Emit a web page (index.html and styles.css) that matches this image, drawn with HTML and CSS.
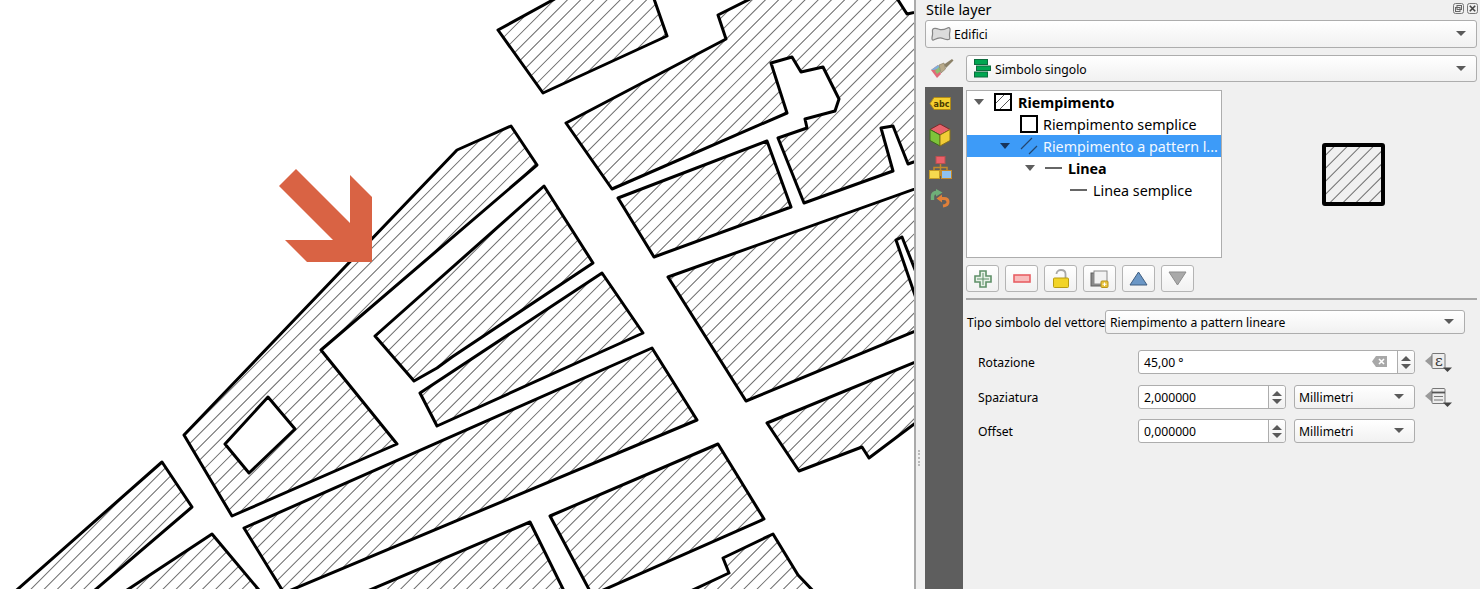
FILE: index.html
```html
<!DOCTYPE html>
<html lang="it">
<head>
<meta charset="utf-8">
<title>Stile layer</title>
<link rel="stylesheet" href="styles.css">
</head>
<body>
<div class="app">
  <div class="map">
    <svg class="map-svg" width="914" height="589" viewBox="0 0 914 589">
      <defs>
        <path id="blds" d="M498 30L560 -4L653 -4L667 36L543 93Z
          M566 123L726 39L718 15L770 -11L890 -11L898 0L907 14L930 9L930 156L908 164L893 126L881 128L893 171L804 203L778 138L807 128L805 119L835 111L839 99L823 67L801 72L792 57L771 63L787 113L612 189Z
          M618 198L767 141L791 207L654 257Z
          M668 277L940 180L940 290L925 295L902 237L896 240L918 304L925 327L746 401Z
          M767 423L930 356L930 412L869 458L862 447L799 471Z
          M550 516L718 444L764 519L592 595Z
          M244 528L652 348L697 420L284 593Z
          M358 595L530 522L566 595Z
          M680 596L729 573L723 558L773 534L798 575L818 596Z
          M10 596L162 462L192 507L88 596Z
          M118 596L212 534L264 596Z
          M184 435L457 150L511 126L537 165L321 350L397 444L232 516Z
          M268 397L225 444L249 473L295 429Z
          M375 336L544 186L593 263L452 357L437 368L414 381Z
          M420 393L602 273L643 333L437 426Z"/>
        <clipPath id="bldclip"><use href="#blds" clip-rule="evenodd"/></clipPath>
      </defs>
      <g clip-path="url(#bldclip)">
        <line class="hatch-map" x1="0" y1="0" x2="800" y2="800"/>
      </g>
      <use class="bld" href="#blds"/>
      <polygon class="arrow" points="296,169 279,186 333,240 285,240 307,262 372,262 372,197 350,175 350,223"/>
    </svg>
  </div>

  <aside class="panel">
    <span class="grip"></span>
    <header class="titlebar">
      <span class="title">Stile layer</span>
      <span class="dock-btns">
        <svg width="11" height="11" viewBox="0 0 11 11"><rect class="dock-frame" x=".5" y=".5" width="10" height="10" rx="2"/><rect class="dock-line" x="4" y="2.5" width="4.5" height="4"/><rect class="dock-line" x="2.5" y="4.5" width="4.5" height="4"/></svg>
        <svg width="11" height="11" viewBox="0 0 11 11"><rect class="dock-frame" x=".5" y=".5" width="10" height="10" rx="2"/><path class="dock-x" d="M2.8 2.8L8.2 8.2M8.2 2.8L2.8 8.2"/></svg>
      </span>
    </header>

    <div class="combo combo-layer">
      <svg class="ico-blob" width="20" height="14" viewBox="0 0 20 14"><path d="M1.5 3C2 .8 5 1 8 2.2S13 2.8 16 1.2 19.5 2 18.8 5 18.6 9 18.8 11 15 13 12 11.5 6 11.2 3.5 12.6 .6 12 1.3 9 1.2 5 1.5 3Z"/></svg>
      <span class="combo-text">Edifici</span>
      <i class="caret"></i>
    </div>

    <div class="renderer-row">
      <div class="brush-cell">
        <svg width="24" height="22" viewBox="0 0 24 22">
          <path fill="#e06a78" d="M1 12L8 7L11 16L7 20Z"/>
          <path fill="#7fb0d8" d="M1 12L8 7L11 10L4 12Z"/>
          <path fill="#8fbf70" d="M5 13L9 9L11 13L7 16Z"/>
          <path fill="#b8aa8a" stroke="#8b8168" stroke-width=".7" d="M9 7L14 5L15.500 11L11 15Z"/>
          <path fill="#8b8168" d="M14 6.500L22 1L23.500 2.500L16 10Z"/>
        </svg>
      </div>
      <div class="combo combo-renderer">
        <svg class="ico-single" width="17" height="19" viewBox="0 0 17 19">
          <rect x=".5" y=".5" width="13" height="5" /><rect x="2.5" y="7" width="14" height="4.500"/><rect x=".5" y="13" width="13" height="5"/>
        </svg>
        <span class="combo-text">Simbolo singolo</span>
        <i class="caret"></i>
      </div>
    </div>

    <div class="main">
      <nav class="sidebar">
        <span class="side-item">
          <svg width="23" height="15" viewBox="0 0 23 15"><path fill="#f5cf30" stroke="#b08a18" d="M5 1.500H21.500V13.500H5L1 7.500Z"/><text class="abc" x="12.500" y="10.500" text-anchor="middle">abc</text></svg>
        </span>
        <span class="side-item">
          <svg width="22" height="24" viewBox="0 0 22 24"><path fill="#e8636b" stroke="#7a2b2b" d="M11 1L21 6.500L11 12L1 6.500Z"/><path fill="#7ec33a" stroke="#3d6b1c" d="M1 6.500L11 12V23L1 17.500Z"/><path fill="#f2cd37" stroke="#8a7216" d="M21 6.500L11 12V23L21 17.500Z"/></svg>
        </span>
        <span class="side-item">
          <svg width="23" height="23" viewBox="0 0 23 23"><path fill="none" stroke="#c48a2a" stroke-width="1.500" d="M11.500 7V20M5 15V11.500H18V15"/><rect fill="#ec5f68" stroke="#b85050" x="7" y=".5" width="9" height="7"/><rect fill="#f6d94f" stroke="#c49a25" x=".5" y="14.500" width="10" height="8"/><rect fill="#8fc2f0" stroke="#c48a2a" x="12.500" y="14.500" width="10" height="8"/></svg>
        </span>
        <span class="side-item">
          <svg width="21" height="21" viewBox="0 0 21 21"><path fill="none" stroke="#6fae78" stroke-width="3.400" d="M3.500 11V7C3.500 4.500 5 3.500 8 3.500"/><path fill="#6fae78" d="M7 0L13.500 3.500L7 7.500Z"/><path fill="none" stroke="#e0803a" stroke-width="3" d="M13 9.500H15C18 9.500 19 11 19 13S17.500 16.500 14 17"/><path fill="#e0803a" d="M13 5.500L7.500 9.500L13 13.500Z"/></svg>
        </span>
      </nav>

      <div class="content">
        <div class="top-split">
          <ul class="tree">
            <li class="row lvl0">
              <i class="tw"></i>
              <svg class="sym" width="18" height="18" viewBox="0 0 18 18"><rect class="sym-box" x="1" y="1" width="16" height="16"/><path class="sym-hatch" d="M2 10L10 2M6 16L16 6"/></svg>
              <b class="label">Riempimento</b>
            </li>
            <li class="row lvl1">
              <svg class="sym" width="18" height="18" viewBox="0 0 18 18"><rect class="sym-box" x="1" y="1" width="16" height="16"/></svg>
              <span class="label">Riempimento semplice</span>
            </li>
            <li class="row lvl1b selected">
              <i class="tw"></i>
              <svg class="sym" width="18" height="18" viewBox="0 0 18 18"><path class="sym-sel" d="M1 12L12 1M9 17L17 9"/></svg>
              <span class="label">Riempimento a pattern l...</span>
            </li>
            <li class="row lvl2">
              <i class="tw"></i>
              <svg class="sym" width="18" height="18" viewBox="0 0 18 18"><path class="sym-line" d="M0 9H17"/></svg>
              <b class="label">Linea</b>
            </li>
            <li class="row lvl3">
              <svg class="sym" width="18" height="18" viewBox="0 0 18 18"><path class="sym-line" d="M0 9H17"/></svg>
              <span class="label">Linea semplice</span>
            </li>
          </ul>
          <div class="preview-wrap">
            <svg class="preview" width="63" height="63" viewBox="0 0 63 63">
              <defs><clipPath id="pvclip"><rect x="2" y="2" width="59" height="59"/></clipPath></defs>
              <g clip-path="url(#pvclip)"><line class="hatch-pv" x1="0" y1="0" x2="70" y2="70"/></g>
              <rect class="pv-box" x="2" y="2" width="59" height="59" rx="1"/>
            </svg>
          </div>
        </div>

        <div class="tools">
          <button class="tool"><svg width="18" height="18" viewBox="0 0 18 18"><path fill="#e8f1e8" stroke="#5f9068" stroke-width="1.600" d="M6 1H12V6H17V12H12V17H6V12H1V6H6Z"/><path stroke="#5f9068" d="M9 3V15M3 9H15"/></svg></button>
          <button class="tool"><svg width="18" height="9" viewBox="0 0 18 9"><rect fill="#f8bcbc" stroke="#e85f64" stroke-width="1.600" x="1" y="1" width="16" height="7"/></svg></button>
          <button class="tool"><svg width="16" height="19" viewBox="0 0 16 19"><path fill="none" stroke="#a8a8a8" stroke-width="1.800" d="M3.500 5C3.500 2.500 5.500 1 8 1S12.500 2.500 12.500 5V10"/><rect fill="#f2d428" stroke="#b89c12" x=".5" y="9" width="15" height="9.500" rx="1"/></svg></button>
          <button class="tool"><svg width="19" height="18" viewBox="0 0 19 18"><rect fill="#8a8a8a" stroke="#5f5f5f" x="1" y="3" width="13" height="13"/><rect fill="#f2f2f2" stroke="#8a8a8a" x="4" y="1" width="13" height="13"/><rect fill="#e8c23a" stroke="#b8931c" x="11" y="11" width="7" height="6.500" rx="1"/><path stroke="#fff" d="M14.500 12.500V16M12.500 14.200H16.500"/></svg></button>
          <button class="tool"><svg width="19" height="15" viewBox="0 0 19 15"><path fill="#6b97c6" stroke="#3e5d80" d="M9.500 1L18 14H1Z"/></svg></button>
          <button class="tool"><svg width="19" height="15" viewBox="0 0 19 15"><path fill="#a9a9a9" stroke="#8d8d8d" d="M1 1H18L9.500 14Z"/></svg></button>
        </div>

        <hr class="divider">

        <div class="type-row">
          <span class="type-label">Tipo simbolo del vettore</span>
          <div class="combo combo-type"><span class="combo-text">Riempimento a pattern lineare</span><i class="caret"></i></div>
        </div>

        <div class="prop prop-rot">
          <span class="prop-label">Rotazione</span>
          <div class="spin spin-wide">
            <span class="spin-value">45,00 °</span>
            <svg class="clear" width="15" height="11" viewBox="0 0 15 11"><path fill="#a8a8a8" d="M4 0H15V11H4L0 5.500Z"/><path stroke="#fff" stroke-width="1.600" d="M7 3L12 8M12 3L7 8"/></svg>
            <span class="spin-btns"><i class="up"></i><i class="down"></i></span>
          </div>
          <svg class="dd" width="27" height="21" viewBox="0 0 27 21"><path fill="#9a9a9a" d="M0 9L7 3V15Z"/><rect fill="#ededed" stroke="#777" x="7" y="1.500" width="13" height="15" rx="1"/><text class="eps" x="14" y="14" text-anchor="middle">ε</text><path fill="#444" d="M18 15.500H27L22.500 20Z"/></svg>
        </div>

        <div class="prop prop-spa">
          <span class="prop-label">Spaziatura</span>
          <div class="spin spin-num">
            <span class="spin-value">2,000000</span>
            <span class="spin-btns"><i class="up"></i><i class="down"></i></span>
          </div>
          <div class="combo combo-unit"><span class="combo-text">Millimetri</span><i class="caret"></i></div>
          <svg class="dd" width="27" height="21" viewBox="0 0 27 21"><path fill="#9a9a9a" d="M0 9L7 3V15Z"/><rect fill="#ededed" stroke="#777" x="7" y="1.500" width="13" height="15" rx="1"/><path stroke="#555" stroke-width="1.800" d="M7 5.500H20"/><path stroke="#777" d="M9 9.500H18M9 13H18"/><path fill="#444" d="M18 15.500H27L22.500 20Z"/></svg>
        </div>

        <div class="prop prop-off">
          <span class="prop-label">Offset</span>
          <div class="spin spin-num">
            <span class="spin-value">0,000000</span>
            <span class="spin-btns"><i class="up"></i><i class="down"></i></span>
          </div>
          <div class="combo combo-unit"><span class="combo-text">Millimetri</span><i class="caret"></i></div>
        </div>
      </div>
    </div>
  </aside>
</div>
</body>
</html>
```

FILE: styles.css
```css
* { box-sizing: border-box; }
html, body { margin: 0; height: 100%; overflow: hidden; background: #fff; }
body { font-family: "Noto Sans", "Open Sans", sans-serif; font-size: 12.2px; color: #000; }

.app { display: flex; width: 1480px; height: 589px; }

.map { width: 914px; height: 589px; flex: none; background: #fff; overflow: hidden; }
.map-svg { display: block; }
.bld { fill: none; fill-rule: evenodd; stroke: #000; stroke-width: 3; stroke-linejoin: round; }
.hatch-map {
  fill: none;
  stroke: #6e6e6e;
  stroke-width: 2400;
  stroke-dasharray: 1 8.334;
  stroke-dashoffset: 0.71;
}
.hatch-pv {
  fill: none;
  stroke: #757575;
  stroke-width: 200;
  stroke-dasharray: 1 8.192;
  stroke-dashoffset: 7.79;
}
.arrow { fill: #d96344; }

.panel {
  position: relative;
  width: 566px;
  flex: none;
  display: flex;
  flex-direction: column;
  background: #f0f0f0;
  border-left: 2px solid #aaa;
  padding: 0 3px 0 9px;
}
.grip { position: absolute; left: 2px; top: 450px; width: 2px; height: 16px; border-left: 2px dotted #bbb; }

.titlebar { height: 20px; display: flex; align-items: center; justify-content: space-between; flex: none; }
.title { font-size: 14.4px; padding-left: 1px; line-height: 18px; }
.dock-btns { display: flex; gap: 3px; margin: -4px -1px 0 0; }
.dock-btns svg { display: block; }
.dock-frame { fill: #eee; stroke: #777; }
.dock-line { fill: none; stroke: #666; }
.dock-x { stroke: #444; stroke-width: 1.6; fill: none; }

.combo {
  position: relative;
  display: flex;
  align-items: center;
  border: 1px solid #adadad;
  border-radius: 3px;
  background: linear-gradient(#fff, #f1f1f1);
  flex: none;
}
.combo-text { line-height: 16px; margin-top: 2px; white-space: nowrap; }
.caret {
  position: absolute;
  right: 10px;
  top: 50%;
  margin-top: -3px;
  border-left: 5px solid transparent;
  border-right: 5px solid transparent;
  border-top: 5.500px solid #5a5a5a;
}

.combo-layer { height: 28px; padding-left: 5px; gap: 3px; }
.ico-blob path { fill: #dcdcdc; stroke: #858585; stroke-width: 1.2; }

.renderer-row { display: flex; margin-top: 7px; flex: none; }
.brush-cell { width: 41px; flex: none; height: 27px; padding-left: 5px; display: flex; align-items: center; }
.combo-renderer { flex: 1; height: 27px; padding-left: 7px; gap: 4px; }
.ico-single rect { fill: #00a651; stroke: #0d6b3d; stroke-width: 1; }

.main { display: flex; flex: 1; margin-top: 5px; min-height: 0; }
.sidebar { width: 38px; flex: none; background: #5e5e5e; display: flex; flex-direction: column; padding-left: 4px; }
.side-item { height: 32px; display: flex; align-items: center; }
.abc { font: bold 8px "DejaVu Sans", sans-serif; fill: #4a3a00; }

.content { flex: 1; padding: 3px 0 0 3px; min-width: 0; }

.top-split { display: flex; height: 168px; }
.tree {
  list-style: none;
  margin: 0;
  padding: 0;
  width: 256px;
  height: 168px;
  flex: none;
  background: #fff;
  border: 1px solid #adadad;
}
.row { height: 22px; display: flex; align-items: center; font-size: 14.3px; }
.row .sym { flex: none; margin-right: 5px; }
.row .label { white-space: nowrap; line-height: 20px; margin-top: 2px; }
.row b.label { font-weight: 700; }
.tw {
  flex: none;
  width: 0;
  height: 0;
  margin-right: 10px;
  border-left: 5.500px solid transparent;
  border-right: 5.500px solid transparent;
  border-top: 6px solid #5e5e5e;
}
.lvl0 { padding-left: 7px; }
.lvl0 .sym { margin-right: 6px; }
.lvl1 { padding-left: 53px; }
.lvl1b { padding-left: 33px; }
.lvl2 { padding-left: 58px; }
.lvl3 { padding-left: 103px; }
.selected { background: #3d9bf8; color: #f2f8ff; }
.selected .tw { border-top-color: #17345a; }

.sym-box { fill: #fff; stroke: #000; stroke-width: 2; }
.sym-hatch { stroke: #555; stroke-width: 1; fill: none; }
.sym-sel { stroke: #24476f; stroke-width: 1.200; fill: none; }
.sym-line { stroke: #000; stroke-width: 1.200; fill: none; }

.preview-wrap { flex: 1; display: flex; justify-content: flex-start; padding: 53px 0 0 100px; }
.pv-box { fill: none; stroke: #000; stroke-width: 4; }

.tools { display: flex; gap: 6px; margin-top: 7px; height: 27px; }
.tool {
  width: 33px;
  height: 27px;
  padding: 0;
  display: flex;
  align-items: center;
  justify-content: center;
  border: 1px solid #b4b4b4;
  border-radius: 3px;
  background: linear-gradient(#fff, #f1f1f1);
}

.divider { height: 2px; margin: 6px 0 0; border: 0; background: #a8a8a8; }

.type-row { display: flex; align-items: center; margin-top: 10px; padding-left: 1px; height: 24px; }
.type-label { width: 138px; flex: none; white-space: nowrap; }
.combo-type { width: 360px; height: 24px; padding-left: 4px; }

.prop { display: flex; align-items: center; padding-left: 12px; height: 24px; }
.prop-rot { margin-top: 16px; }
.prop-spa { margin-top: 11px; }
.prop-off { margin-top: 10px; }
.prop-label { width: 160px; flex: none; }

.spin {
  position: relative;
  height: 24px;
  flex: none;
  display: flex;
  align-items: center;
  background: #fff;
  border: 1px solid #adadad;
  border-radius: 3px;
  padding-left: 5px;
}
.spin-wide { width: 277px; }
.spin-num { width: 148px; }
.spin-value { line-height: 16px; margin-top: 1px; }
.clear { position: absolute; right: 27px; top: 5px; }
.spin-btns {
  position: absolute;
  right: 0;
  top: 0;
  bottom: 0;
  width: 17px;
  display: flex;
  flex-direction: column;
  align-items: center;
  justify-content: center;
  gap: 3px;
  border-left: 1px solid #adadad;
  background: linear-gradient(#fff, #f1f1f1);
  border-radius: 0 3px 3px 0;
}
.up, .down { width: 0; height: 0; border-left: 5.500px solid transparent; border-right: 5.500px solid transparent; }
.up { border-bottom: 5.500px solid #5a5a5a; }
.down { border-top: 5.500px solid #5a5a5a; }

.combo-unit { width: 121px; height: 24px; margin-left: 8px; padding-left: 4px; }
.dd { flex: none; margin-left: 10px; }
.eps { font: 15px "DejaVu Serif", serif; fill: #333; }
```
